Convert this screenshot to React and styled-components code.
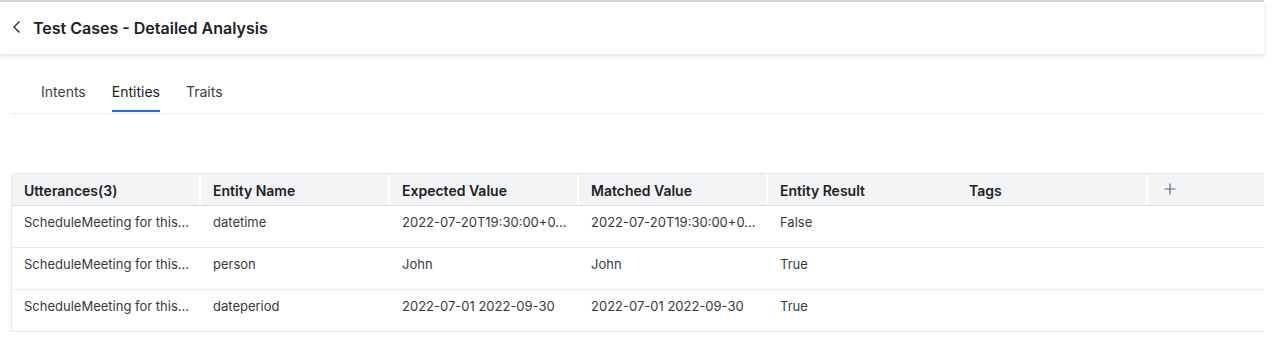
import React from 'react';
import styled, { createGlobalStyle } from 'styled-components';

const GlobalStyle = createGlobalStyle`
  body {
    margin: 0;
    background: #fff;
    font-family: Inter, "Noto Sans", sans-serif;
    color: #2f3133;
  }
`;

const columns = [
  { key: 'utterance', title: 'Utterances(3)', width: 187 },
  { key: 'entity', title: 'Entity Name', width: 189, sep: true },
  { key: 'expected', title: 'Expected Value', width: 189, sep: true },
  { key: 'matched', title: 'Matched Value', width: 189, sep: true },
  { key: 'result', title: 'Entity Result', width: 189, sep: true },
  { key: 'tags', title: 'Tags', width: 191 },
];

const rows = [
  { utterance: 'ScheduleMeeting for this...', entity: 'datetime', expected: '2022-07-20T19:30:00+0...', matched: '2022-07-20T19:30:00+0...', result: 'False', tags: '' },
  { utterance: 'ScheduleMeeting for this...', entity: 'person', expected: 'John', matched: 'John', result: 'True', tags: '' },
  { utterance: 'ScheduleMeeting for this...', entity: 'dateperiod', expected: '2022-07-01 2022-09-30', matched: '2022-07-01 2022-09-30', result: 'True', tags: '' },
];

export default function App() {
  return (
    <>
      <GlobalStyle />
      <Page>
        <Header>
          <BackButton aria-label="Back">
            <svg width="10" height="14" viewBox="0 0 10 14" fill="none">
              <path d="M7.5 1.5L2 7l5.5 5.5" stroke="#2b2d30" strokeWidth="1.4" />
            </svg>
          </BackButton>
          <Title>Test Cases - Detailed Analysis</Title>
        </Header>

        <Tabs>
          <Tab>Intents</Tab>
          <Tab active>Entities</Tab>
          <Tab>Traits</Tab>
        </Tabs>

        <Table>
          <HeadRow>
            {columns.map(col => (
              <HeadCell key={col.key} $width={col.width} $sep={col.sep}>{col.title}</HeadCell>
            ))}
            <AddCell>
              <svg width="12" height="12" viewBox="0 0 12 12">
                <path d="M6 0.5v11M0.5 6h11" stroke="#5b6b86" strokeWidth="1.2" />
              </svg>
            </AddCell>
          </HeadRow>
          {rows.map((row, i) => (
            <Row key={i}>
              {columns.map(col => (
                <Cell key={col.key} $width={col.width}>{row[col.key]}</Cell>
              ))}
              <Filler />
            </Row>
          ))}
        </Table>
      </Page>
    </>
  );
}

const Page = styled.div`
  width: 1264px;
  border-top: 2px solid #d4d4d4;
`;

const Header = styled.div`
  height: 52px;
  display: flex;
  align-items: center;
  padding-left: 12px;
  gap: 11px;
  box-shadow: 0 2px 4px rgba(0, 0, 0, 0.12);
  position: relative;
`;

const BackButton = styled.span`
  display: flex;
  align-items: center;
  margin-top: -2px;
`;

const Title = styled.h1`
  margin: 0;
  font-size: 16px;
  font-weight: 600;
  color: #202124;
  margin-top: -1px;
`;

const Tabs = styled.div`
  display: flex;
  gap: 26px;
  margin: 15px 0 0 11px;
  padding-left: 30px;
  border-bottom: 1px solid #ececec;
`;

const Tab = styled.div`
  font-size: 14px;
  color: ${p => (p.active ? '#202124' : '#3c4043')};
  padding: 14px 0 10px;
  margin-bottom: 1px;
  border-bottom: 2px solid ${p => (p.active ? '#1a6ff0' : 'transparent')};
`;

const Table = styled.div`
  margin: 59px 0 0 11px;
  border-left: 1px solid #e6e7ea;
  border-top: 1px solid #e6e7ea;
  border-top-left-radius: 4px;
  font-size: 13px;
`;

const HeadRow = styled.div`
  display: flex;
  height: 31px;
  background: #f3f4f6;
  border-bottom: 1px solid #dcdde0;
  border-top-left-radius: 4px;
`;

const HeadCell = styled.div`
  width: ${p => p.$width}px;
  flex-shrink: 0;
  box-sizing: border-box;
  display: flex;
  align-items: center;
  padding: 1px 0 0 12px;
  font-size: 14px;
  font-weight: 600;
  color: #202124;
  border-left: 2px solid ${p => (p.$sep ? '#fff' : 'transparent')};
  &:first-child { border-left: none; }
`;

const AddCell = styled.div`
  flex: 1;
  display: flex;
  align-items: center;
  padding-left: 16px;
  padding-bottom: 2px;
  border-left: 2px solid #fff;
`;

const Row = styled.div`
  display: flex;
  height: 41px;
  border-bottom: 1px solid #e9eaec;
`;

const Cell = styled.div`
  width: ${p => p.$width}px;
  flex-shrink: 0;
  box-sizing: border-box;
  padding: 8px 0 0 14px;
  color: #363a40;
  white-space: nowrap;
  overflow: hidden;
  &:first-child { padding-left: 12px; }
`;

const Filler = styled.div`
  flex: 1;
`;
